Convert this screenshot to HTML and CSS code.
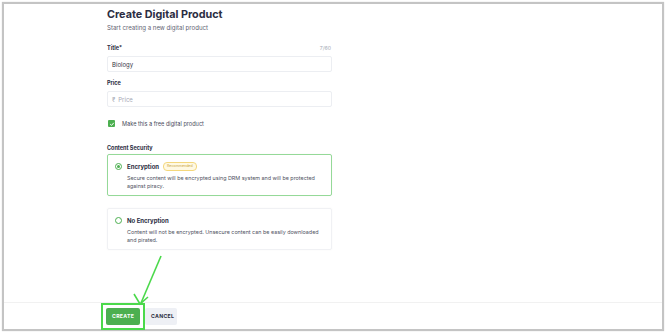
FILE: index.html
```html
<!DOCTYPE html>
<html lang="en">
<head>
  <meta charset="UTF-8" />
  <meta name="viewport" content="width=device-width, initial-scale=1.0"/>
  <title>Create Digital Product</title>
  <link rel="stylesheet" href="styles.css">
</head>
<body>

<div class="frame">
  <div class="content">
    <h1 class="title">Create Digital Product</h1>
    <p class="subtitle">Start creating a new digital product</p>

    <div class="field">
      <div class="label-row">
        <label class="label">Title*</label>
        <span class="counter">7/60</span>
      </div>
      <div class="input">Biology</div>
    </div>

    <div class="field">
      <div class="label-row">
        <label class="label">Price</label>
      </div>
      <div class="input placeholder"><span class="rupee">₹</span> Price</div>
    </div>

    <div class="check-row">
      <span class="checkbox">
        <svg viewBox="0 0 10 10" width="6" height="6"><path d="M2 5.2 L4.2 7.3 L8 3" fill="none" stroke="#fff" stroke-width="1.6"/></svg>
      </span>
      <span class="check-label">Make this a free digital product</span>
    </div>

    <div class="label section-label">Content Security</div>

    <div class="option selected">
      <div class="option-head">
        <span class="radio on"></span>
        <span class="option-name">Encryption</span>
        <span class="badge">Recommended</span>
      </div>
      <p class="option-desc">Secure content will be encrypted using DRM system and will be protected against piracy.</p>
    </div>

    <div class="option">
      <div class="option-head">
        <span class="radio"></span>
        <span class="option-name">No Encryption</span>
      </div>
      <p class="option-desc">Content will not be encrypted. Unsecure content can be easily downloaded and pirated.</p>
    </div>
  </div>

  <div class="footer">
    <span class="highlight">
      <button class="btn btn-create">CREATE</button>
    </span>
    <button class="btn btn-cancel">CANCEL</button>
  </div>

  <svg class="arrow" width="40" height="60" viewBox="0 0 40 60">
    <path d="M30 2 L10 49" fill="none" stroke="#4bd94b" stroke-width="1.6"/>
    <path d="M3 40 L9 50 L17 43" fill="none" stroke="#4bd94b" stroke-width="1.6"/>
  </svg>
</div>

</body>
</html>
```

FILE: styles.css
```css
body {
  margin: 0;
  width: 670px;
  height: 332px;
  background: #fff;
  font-family: Inter, "Noto Sans", sans-serif;
  color: #2b2d42;
}
.frame {
  position: relative;
  margin: 2px 0 0 2px;
  width: 658px;
  height: 325px;
  border: 2px solid #c4c4c4;
  display: flex;
  flex-direction: column;
  box-shadow: 0 0 1px rgba(0,0,0,0.2);
}
.content {
  flex: 1;
  width: 225px;
  padding: 3px 0 0 103px;
}
.title {
  margin: 0;
  font-size: 10.8px;
  font-weight: 700;
  line-height: 16px;
  color: #2b2d42;
}
.subtitle {
  margin: 1px 0 0;
  font-size: 6.1px;
  line-height: 8px;
  color: #5f6373;
}
.field {
  margin-top: 12px;
}
.field + .field {
  margin-top: 7px;
}
.label-row {
  display: flex;
  justify-content: space-between;
  align-items: center;
  height: 8px;
}
.label {
  font-size: 5.5px;
  font-weight: 700;
  color: #2b2d42;
}
.counter {
  font-size: 5.2px;
  color: #a4a7b3;
  padding-right: 1px;
}
.input {
  margin-top: 4px;
  height: 16px;
  border: 1px solid #eceef2;
  border-radius: 2px;
  box-sizing: border-box;
  padding-left: 4px;
  display: flex;
  align-items: center;
  font-size: 6px;
  color: #2f3140;
}
.placeholder {
  color: #a6a9b5;
}
.rupee {
  margin-right: 3px;
}
.check-row {
  display: flex;
  align-items: center;
  margin-top: 13px;
  height: 7px;
}
.checkbox {
  width: 7px;
  height: 7px;
  margin-left: 1px;
  background: #4caf50;
  border-radius: 1px;
  display: flex;
  align-items: center;
  justify-content: center;
}
.check-label {
  margin-left: 7px;
  font-size: 5.6px;
  color: #4a4d5c;
}
.section-label {
  margin-top: 17px;
  line-height: 8px;
}
.option {
  margin-top: 2px;
  height: 42px;
  box-sizing: border-box;
  border: 1px solid #f0f1f4;
  border-radius: 2px;
  padding: 7px 10px 0 7px;
  box-shadow: 0 0 2px rgba(0,0,0,0.04);
}
.option + .option {
  margin-top: 12px;
}
.option.selected {
  border-color: #95d998;
}
.option-head {
  display: flex;
  align-items: center;
  height: 8px;
}
.radio {
  width: 5px;
  height: 5px;
  border: 1.2px solid #4caf50;
  border-radius: 50%;
  position: relative;
}
.radio.on::after {
  content: "";
  position: absolute;
  left: 1px;
  top: 1px;
  width: 3px;
  height: 3px;
  border-radius: 50%;
  background: #4caf50;
}
.option-name {
  margin-left: 5px;
  font-size: 6px;
  font-weight: 700;
  color: #2b2d42;
}
.badge {
  margin-left: 4px;
  height: 7px;
  padding: 0 3px;
  border: 1px solid #f4d77c;
  background: #fff9e3;
  border-radius: 4px;
  font-size: 3.6px;
  line-height: 7px;
  color: #c9a43c;
}
.option-desc {
  margin: 4px 0 0 12px;
  font-size: 5.4px;
  line-height: 8px;
  color: #4f5262;
}
.footer {
  height: 26px;
  border-top: 1px solid #f1f1f1;
  display: flex;
  align-items: center;
  padding-left: 97px;
  gap: 0;
}
.highlight {
  display: flex;
  padding: 3px;
  border: 2px solid #4bd94b;
}
.btn {
  height: 17px;
  border: none;
  border-radius: 2px;
  font-family: Inter, "Noto Sans", sans-serif;
  font-size: 5.2px;
  font-weight: 700;
  letter-spacing: 0.3px;
  padding: 0 6px;
  cursor: pointer;
}
.btn-create {
  width: 34px;
  background: #4caf50;
  color: #fff;
}
.btn-cancel {
  width: 32px;
  background: #eef0f5;
  color: #2b2d42;
}
.arrow {
  position: absolute;
  left: 127px;
  top: 250px;
}
```
